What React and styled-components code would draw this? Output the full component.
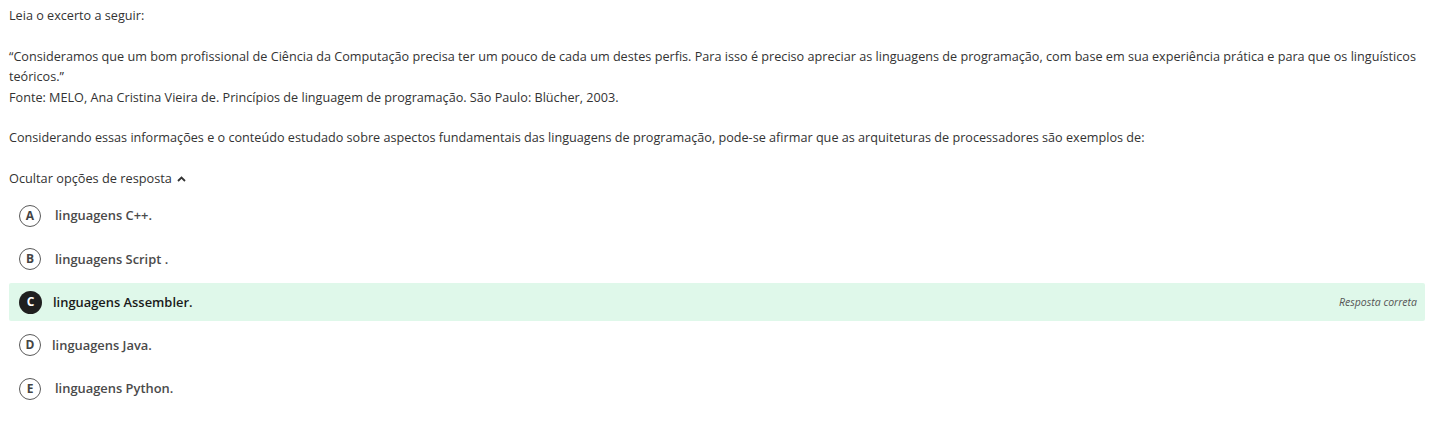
import React from 'react';
import styled, { createGlobalStyle } from 'styled-components';

const OPTIONS = [
  { id: 'A', text: 'linguagens C++.', indent: 14 },
  { id: 'B', text: 'linguagens Script .', indent: 14 },
  { id: 'C', text: 'linguagens Assembler.', indent: 11, correct: true },
  { id: 'D', text: 'linguagens Java.', indent: 11 },
  { id: 'E', text: 'linguagens Python.', indent: 14 },
];

const GlobalStyle = createGlobalStyle`
  body {
    margin: 0;
    background: #fff;
    font-family: "Open Sans", "Liberation Sans", sans-serif;
    color: #333;
  }
`;

const Page = styled.div`
  padding: 5px 8px 0 9px;
  font-size: 12.65px;
  line-height: 20.5px;
`;

const Paragraph = styled.p`
  margin: 0 0 ${p => p.gap ?? 20}px;
`;

const Toggle = styled.div`
  display: flex;
  align-items: center;
  gap: 5px;
  margin-top: 1px;
  height: 20px;
  font-size: 12.75px;
  color: #333;
`;

const OptionList = styled.div`
  display: flex;
  flex-direction: column;
  gap: 5.3px;
  margin-top: 8px;
  margin-right: 8px;
`;

const Row = styled.div`
  display: flex;
  align-items: center;
  height: 38px;
  padding: 0 8px 0 10px;
  border-radius: 2px;
  background: ${p => (p.correct ? '#dff8ea' : 'transparent')};
`;

const Letter = styled.span`
  box-sizing: border-box;
  flex: none;
  display: flex;
  align-items: center;
  justify-content: center;
  width: ${p => (p.filled ? 23 : 22)}px;
  height: ${p => (p.filled ? 23 : 22)}px;
  border-radius: 50%;
  border: ${p => (p.filled ? 'none' : '1.5px solid #5a5a5a')};
  background: ${p => (p.filled ? '#1f1f1f' : '#fff')};
  color: ${p => (p.filled ? '#fff' : '#444')};
  font-size: 12px;
  font-weight: 700;
  line-height: 1;
`;

const OptionText = styled.span`
  margin-left: ${p => p.indent}px;
  font-size: 12.9px;
  font-weight: 600;
  color: ${p => (p.correct ? '#1a1a1a' : '#4a4a4a')};
`;

const Verdict = styled.span`
  margin-left: auto;
  font-size: 10.5px;
  font-style: italic;
  color: #555;
`;

const Chevron = () => (
  <svg width="9" height="6" viewBox="0 0 9 6">
    <path d="M1 5 L4.5 1.5 L8 5" fill="none" stroke="#333" strokeWidth="1.8" />
  </svg>
);

const App = () => (
  <>
    <GlobalStyle />
    <Page>
      <Paragraph>Leia o excerto a seguir:</Paragraph>
      <Paragraph gap={0}>
        “Consideramos que um bom profissional de Ciência da Computação precisa ter um pouco de cada um destes perfis. Para isso é preciso apreciar as linguagens de programação, com base em sua experiência prática e para que os linguísticos teóricos.”
      </Paragraph>
      <Paragraph>Fonte: MELO, Ana Cristina Vieira de. Princípios de linguagem de programação. São Paulo: Blücher, 2003.</Paragraph>
      <Paragraph gap={21}>
        Considerando essas informações e o conteúdo estudado sobre aspectos fundamentais das linguagens de programação, pode-se afirmar que as arquiteturas de processadores são exemplos de:
      </Paragraph>
      <Toggle>
        Ocultar opções de resposta <Chevron />
      </Toggle>
      <OptionList>
        {OPTIONS.map(option => (
          <Row key={option.id} correct={option.correct}>
            <Letter filled={option.correct}>{option.id}</Letter>
            <OptionText indent={option.indent} correct={option.correct}>{option.text}</OptionText>
            {option.correct && <Verdict>Resposta correta</Verdict>}
          </Row>
        ))}
      </OptionList>
    </Page>
  </>
);

export default App;
